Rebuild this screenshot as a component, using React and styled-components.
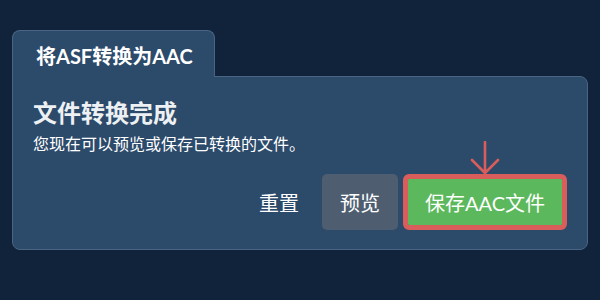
import React from "react";
import styled, { createGlobalStyle } from "styled-components";

const Global = createGlobalStyle`
  html, body { margin: 0; padding: 0; }
  body {
    background: #11233a;
    width: 600px;
    height: 300px;
    overflow: hidden;
    font-family: "Lato", "Noto Sans CJK SC", sans-serif;
    color: #ffffff;
  }
`;

const Page = styled.div`
  padding: 30px 12px 0 12px;
  width: 576px;
`;

const Tab = styled.div`
  position: relative;
  z-index: 1;
  display: inline-flex;
  align-items: center;
  height: 47px;
  padding: 3px 21px 0 23px;
  box-sizing: border-box;
  background: #2c4a6a;
  border: 1px solid #4a6584;
  border-bottom: none;
  border-radius: 8px 8px 0 0;
  margin-bottom: -1px;
  font-size: 20px;
  font-weight: 700;
  color: #ffffff;
`;

const Panel = styled.div`
  background: #2c4a6a;
  border: 1px solid #4a6584;
  border-radius: 0 8px 8px 8px;
  padding: 22px 20px 19px 20px;
  box-sizing: border-box;
  height: 174px;
  display: flex;
  flex-direction: column;
`;

const Heading = styled.h2`
  margin: 0;
  font-size: 24px;
  line-height: 28px;
  font-weight: 700;
  color: #eef1f4;
`;

const Sub = styled.p`
  margin: 7px 0 0 0;
  font-size: 16px;
  line-height: 20px;
  color: #ffffff;
`;

const Actions = styled.div`
  margin-top: auto;
  display: flex;
  justify-content: flex-end;
  align-items: center;
  gap: 5px;
`;

const Button = styled.button`
  font-family: inherit;
  font-size: 20px;
  height: 56px;
  padding: 0 18px;
  border: none;
  border-radius: 5px;
  color: #ffffff;
  cursor: pointer;
  background: ${(p) => (p.$variant === "secondary" ? "#4e5e70" : "transparent")};
`;

const Highlight = styled.div`
  position: relative;
  border: 5px solid #d95d5a;
  border-radius: 6px;
  height: 56px;
  box-sizing: border-box;
  display: flex;
`;

const SaveButton = styled.button`
  font-family: inherit;
  font-size: 20px;
  height: 100%;
  padding: 0 17px;
  border: none;
  border-radius: 1px;
  background: #5cb85c;
  color: #ffffff;
  cursor: pointer;
`;

const Arrow = styled.svg`
  position: absolute;
  left: 50%;
  bottom: 100%;
  margin-bottom: 4px;
  transform: translateX(-50%);
`;

export default function App() {
  return (
    <>
      <Global />
      <Page>
        <Tab>将ASF转换为AAC</Tab>
        <Panel>
          <Heading>文件转换完成</Heading>
          <Sub>您现在可以预览或保存已转换的文件。</Sub>
          <Actions>
            <Button>重置</Button>
            <Button $variant="secondary">预览</Button>
            <Highlight>
              <Arrow width="32" height="34" viewBox="0 0 32 34">
                <path
                  d="M16 1 V32 M3 19 L16 32 L29 19"
                  fill="none"
                  stroke="#d95d5a"
                  strokeWidth="2.6"
                  strokeLinecap="round"
                  strokeLinejoin="round"
                />
              </Arrow>
              <SaveButton>保存AAC文件</SaveButton>
            </Highlight>
          </Actions>
        </Panel>
      </Page>
    </>
  );
}
